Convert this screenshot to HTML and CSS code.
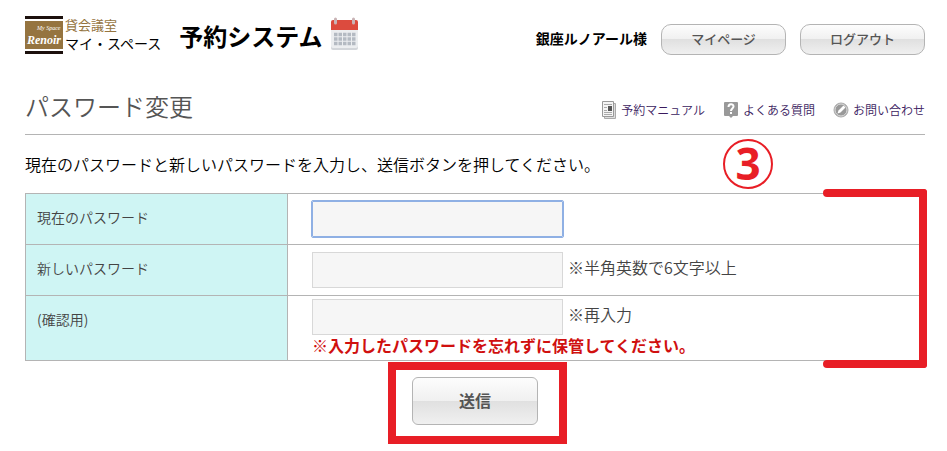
FILE: index.html
```html
<!DOCTYPE html>
<html lang="ja">
<head>
    <meta charset="UTF-8">
    <title>パスワード変更</title>
    <link rel="stylesheet" href="styles.css">
</head>
<body>
    <header class="header">
        <div class="logo">
            <svg class="logo-mark" width="38" height="38" viewBox="0 0 38 38">
                <rect width="38" height="38" fill="#957440"/>
                <rect width="38" height="3" fill="#1c100d"/>
                <rect y="3" width="38" height="2" fill="#fff"/>
                <rect y="33" width="38" height="2" fill="#fff"/>
                <rect y="35" width="38" height="3" fill="#1c100d"/>
                <text x="12" y="14" class="logo-small">My Space</text>
                <text x="2" y="28" class="logo-script">Renoir</text>
            </svg>
            <div class="logo-text">
                <span class="logo-sub">貸会議室</span>
                <span class="logo-name">マイ・スペース</span>
            </div>
        </div>
        <div class="system-name">予約システム</div>
        <svg class="calendar" width="28" height="34" viewBox="0 0 28 34">
            <rect x="0" y="6" width="27" height="28" rx="2" fill="#d3d6da"/>
            <rect x="0" y="6" width="27" height="26" rx="2" fill="#eceef0"/>
            <path d="M0 14V6a2 2 0 0 1 2-2h23a2 2 0 0 1 2 2v8z" fill="#dc4b3e"/>
            <path d="M4.500 3v4M22.500 3v4" stroke="#c9b4b6" stroke-width="3" stroke-linecap="round"/>
            <path d="M3 18.500h21.500M3 23h21.500M3 27.500h21.500" stroke="#b4bac2" stroke-width="3.500" stroke-dasharray="3.500 1"/>
        </svg>
        <div class="user-menu">
            <span class="user-name">銀座ルノアール様</span>
            <button type="button" class="btn btn-head">マイページ</button>
            <button type="button" class="btn btn-head">ログアウト</button>
        </div>
    </header>

    <main>
        <div class="title-bar">
            <h1>パスワード変更</h1>
            <nav class="help-links">
                <a href="#">
                    <svg width="16" height="20" viewBox="0 0 16 20">
                        <path d="M3.500 3.500h11v15h-11z" fill="#ddd" stroke="#aaa"/>
                        <path d="M1.500 1.500h11v15h-11z" fill="#f4f4f4" stroke="#999"/>
                        <path d="M3 4.500h8M3 7.500h3M3 10.500h3M3 12.500h8M3 14.500h8" stroke="#aaa"/>
                        <rect x="7" y="6" width="4" height="5" fill="#555"/>
                    </svg>
                    予約マニュアル
                </a>
                <a href="#">
                    <svg width="16" height="20" viewBox="0 0 16 20">
                        <path d="M2 2h12a1 1 0 0 1 1 1v12a1 1 0 0 1-1 1h-4l-2 2-2-2H2a1 1 0 0 1-1-1V3a1 1 0 0 1 1-1z" fill="#999"/>
                        <path d="M5.500 7c0-3.500 5-3.500 5-.5 0 2-2.500 2-2.500 4.500" fill="none" stroke="#fff" stroke-width="2"/>
                        <rect x="7" y="12" width="2" height="2" fill="#fff"/>
                    </svg>
                    よくある質問
                </a>
                <a href="#">
                    <svg width="16" height="20" viewBox="0 0 16 20">
                        <circle cx="8" cy="10" r="7" fill="#999" stroke="#aaa"/>
                        <circle cx="8" cy="10" r="6" fill="none" stroke="#ddd"/>
                        <path d="M4.500 13.500l1-3 5-5 2 2-5 5z" fill="#fff"/>
                    </svg>
                    お問い合わせ
                </a>
            </nav>
        </div>

        <div class="lead-row">
            <p class="lead">現在のパスワードと新しいパスワードを入力し、送信ボタンを押してください。</p>
            <span class="step-number">3</span>
        </div>

        <form>
            <div class="table-wrap">
                <table class="form-table">
                    <tr>
                        <th><label for="currentPassword">現在のパスワード</label></th>
                        <td><input type="password" id="currentPassword" class="field active"></td>
                    </tr>
                    <tr>
                        <th><label for="newPassword">新しいパスワード</label></th>
                        <td><div class="field-row"><input type="password" id="newPassword" class="field"><span class="note">※半角英数で6文字以上</span></div></td>
                    </tr>
                    <tr>
                        <th><label for="confirmPassword">(確認用)</label></th>
                        <td class="confirm">
                            <div class="field-row"><input type="password" id="confirmPassword" class="field"><span class="note">※再入力</span></div>
                            <p class="warning">※入力したパスワードを忘れずに保管してください。</p>
                        </td>
                    </tr>
                </table>
                <div class="bracket"></div>
            </div>
            <div class="submit-area">
                <button type="submit" class="btn btn-submit">送信</button>
            </div>
        </form>
    </main>
</body>
</html>
```
FILE: styles.css
```css
* {
    box-sizing: border-box;
}

body {
    margin: 0;
    padding: 16px 22px 24px 25px;
    background-color: #fff;
    color: #000;
    font-family: "Noto Sans CJK JP", sans-serif;
    font-size: 16px;
    line-height: 24px;
}

.header {
    display: flex;
    align-items: flex-start;
    height: 64px;
}

.logo {
    display: flex;
    gap: 2px;
}

.logo-small {
    font: italic 6px "Liberation Serif", serif;
    fill: #fff;
}

.logo-script {
    font: italic bold 12px "Liberation Serif", serif;
    fill: #fff;
}

.logo-text {
    display: flex;
    flex-direction: column;
}

.logo-sub {
    color: #957440;
    font-size: 13px;
    line-height: 17px;
}

.logo-name {
    font-size: 14px;
    line-height: 20px;
}

.system-name {
    margin-left: 18px;
    font-size: 24px;
    font-weight: bold;
    line-height: 40px;
}

.calendar {
    margin-left: 8px;
}

.user-menu {
    display: flex;
    align-items: center;
    gap: 14px;
    margin-left: auto;
    padding-top: 8px;
}

.user-name {
    padding-bottom: 3px;
    font-size: 14px;
    font-weight: bold;
}

.btn {
    border: 1px solid #b4b4b4;
    background: linear-gradient(to bottom, #fdfdfd, #f0f0f0 50%, #e0e0e0 50%, #f0f0f0);
    color: #555;
    font-family: inherit;
    cursor: pointer;
}

.btn-head {
    width: 125px;
    height: 31px;
    padding: 0 0 3px;
    border-radius: 10px;
    font-size: 13px;
    font-weight: 500;
}

.title-bar {
    display: flex;
    justify-content: space-between;
    align-items: center;
    height: 55px;
    border-bottom: 1px solid #b4b4b4;
}

h1 {
    margin: 0;
    padding-bottom: 3px;
    color: #555;
    font-size: 24px;
    font-weight: 350;
    line-height: 50px;
}

.help-links {
    display: flex;
    gap: 18px;
    padding-top: 6px;
}

.help-links a {
    display: flex;
    align-items: center;
    gap: 4px;
    color: #3a1a5e;
    font-size: 12px;
    font-weight: 350;
    line-height: 20px;
    text-decoration: none;
}

.lead-row {
    position: relative;
    height: 58px;
}

.lead {
    margin: 0;
    padding-top: 17px;
    font-weight: 350;
}

.step-number {
    position: absolute;
    top: 4px;
    right: 152px;
    width: 50px;
    height: 50px;
    border: 2px solid #e81e26;
    border-radius: 50%;
    color: #e81e26;
    font: bold 44px/44px "Noto Sans", sans-serif;
    text-align: center;
}

.table-wrap {
    position: relative;
}

.form-table {
    width: 100%;
    border-collapse: collapse;
    color: #444;
}

.form-table th,
.form-table td {
    height: 51px;
    border: 1px solid #b4b4b4;
}

.form-table th {
    width: 262px;
    padding: 13px 11px;
    background-color: #cff5f4;
    font-size: 14px;
    font-weight: 350;
    line-height: 20px;
    text-align: left;
    vertical-align: top;
}

.form-table td {
    padding: 7px 24px;
    font-weight: 350;
}

.form-table .confirm {
    padding-top: 3px;
    padding-bottom: 5px;
}

.field-row {
    display: flex;
    align-items: center;
    gap: 5px;
}

.note {
    padding-bottom: 6px;
}

.field {
    display: block;
    width: 251px;
    height: 36px;
    padding: 0 8px;
    border: 1px solid #d8d8d8;
    background-color: #f6f6f6;
    font-size: 16px;
}

.active,
.field:focus {
    border-color: #8fb0e4;
    border-radius: 1px;
    outline: 1px solid #8fb0e4;
}

.warning {
    margin: 0;
    color: #d0100f;
    font-weight: bold;
    line-height: 20px;
}

/* marks the rows to fill in */
.bracket {
    position: absolute;
    top: -4px;
    right: -2px;
    bottom: -7px;
    width: 104px;
    border-right: 8px solid #e81e26;
    border-radius: 3px;
    pointer-events: none;
}

.bracket::before,
.bracket::after {
    content: "";
    position: absolute;
    left: 0;
    right: -8px;
    height: 8px;
    border-radius: 4px;
    background-color: #e81e26;
}

.bracket::before {
    top: 0;
}

.bracket::after {
    bottom: 0;
}

.submit-area {
    position: relative;
    width: 126px;
    margin: 16px auto 0;
}

.submit-area::after {
    content: "";
    position: absolute;
    top: -15px;
    right: -29px;
    bottom: -19px;
    left: -24px;
    border: 8px solid #e81e26;
    pointer-events: none;
}

.btn-submit {
    display: block;
    width: 100%;
    height: 48px;
    padding-bottom: 4px;
    border-radius: 6px;
    font-size: 16px;
    font-weight: bold;
}
```
